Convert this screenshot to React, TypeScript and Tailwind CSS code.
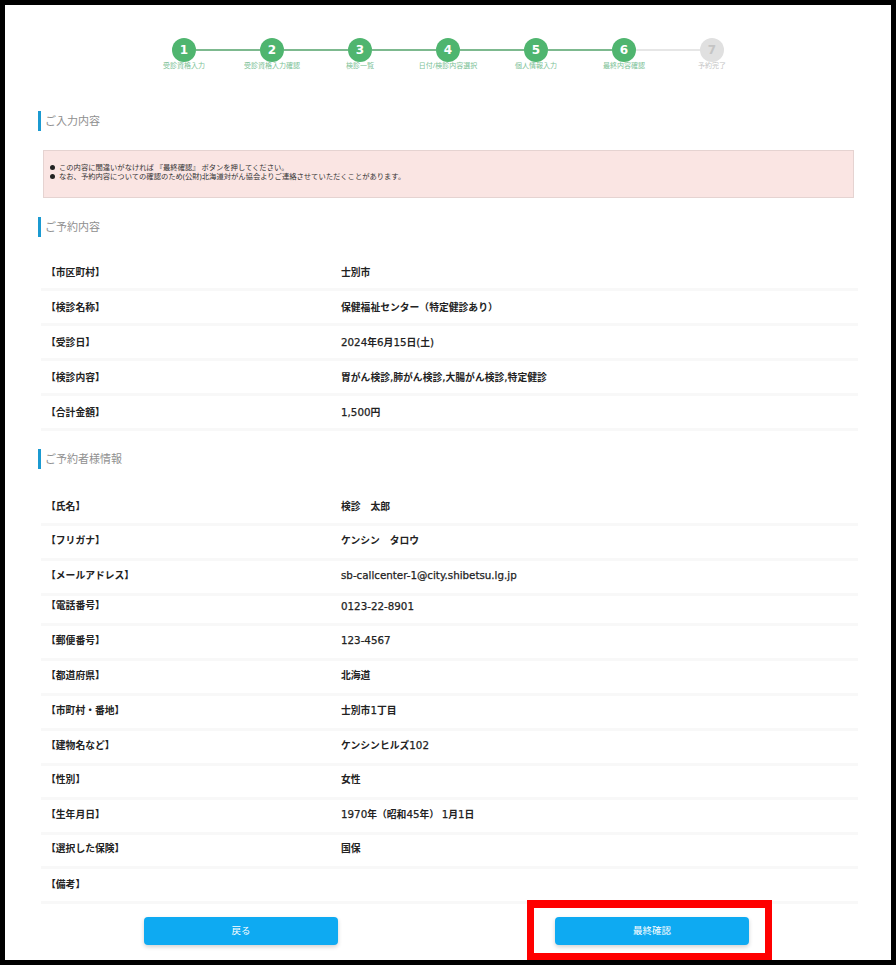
const font = { fontFamily: '"Noto Sans", "Noto Sans CJK JP", sans-serif' }

const steps = [
  { no: 1, label: '受診資格入力' },
  { no: 2, label: '受診資格入力確認' },
  { no: 3, label: '検診一覧' },
  { no: 4, label: '日付/検診内容選択' },
  { no: 5, label: '個人情報入力' },
  { no: 6, label: '最終内容確認' },
  { no: 7, label: '予約完了' },
]

const reserve = [
  ['【市区町村】', '士別市', 35, 'pt-[2px]'],
  ['【検診名称】', '保健福祉センター（特定健診あり）', 35, 'pt-[2px]'],
  ['【受診日】', '2024年6月15日(土)', 35, 'pt-[2px]'],
  ['【検診内容】', '胃がん検診,肺がん検診,大腸がん検診,特定健診', 35, 'pt-[2px]'],
  ['【合計金額】', '1,500円', 35, 'pt-[2px]'],
] as const

const person = [
  ['【氏名】', '検診　太郎', 35, ''],
  ['【フリガナ】', 'ケンシン　タロウ', 35, 'pb-[2px]'],
  ['【メールアドレス】', 'sb-callcenter-1@city.shibetsu.lg.jp', 35, 'pb-[2px]'],
  ['【電話番号】', '0123-22-8901', 30, 'pb-[6px]'],
  ['【郵便番号】', '123-4567', 35, 'pb-[2px]'],
  ['【都道府県】', '北海道', 35, 'pb-[2px]'],
  ['【市町村・番地】', '士別市1丁目', 35, 'pb-[2px]'],
  ['【建物名など】', 'ケンシンヒルズ102', 35, 'pb-[2px]'],
  ['【性別】', '女性', 34, 'pb-[2px]'],
  ['【生年月日】', '1970年（昭和45年） 1月1日', 35, 'pb-[2px]'],
  ['【選択した保険】', '国保', 34, 'pb-[2px]'],
  ['【備考】', '', 35, ''],
] as const

function Stepper() {
  return (
    <div className="flex justify-center">
      {steps.map((s, i) => {
        const done = s.no < 7
        return (
          <div key={s.no} className="flex w-[88px] flex-col items-center">
            <div className="flex w-full items-center">
              <div className={`h-[2px] flex-1 ${i === 0 ? '' : done ? 'bg-[#7db98f]' : 'bg-[#e6e6e6]'}`} />
              <div
                className={`flex size-[24px] items-center justify-center rounded-full font-['DejaVu_Sans'] text-[12px] font-bold ${
                  done ? 'bg-[#4fb56f] text-white' : 'bg-[#e0e0e0] text-[#c4c4c4]'
                }`}
              >
                {s.no}
              </div>
              <div className={`h-[2px] flex-1 ${i === 6 ? '' : s.no < 6 ? 'bg-[#7db98f]' : 'bg-[#e6e6e6]'}`} />
            </div>
            <div className={`-mt-[1px] whitespace-nowrap text-[7px] leading-[10px] ${done ? 'text-[#7cc196]' : 'text-[#c4c4c4]'}`}>
              {s.label}
            </div>
          </div>
        )
      })}
    </div>
  )
}

function Heading({ children }: { children: string }) {
  return (
    <div className="ml-[33px] flex h-[20px] items-center border-l-[3px] border-[#1b9ad1] pl-[4px] text-[11px] text-[#8f8f8f]">
      {children}
    </div>
  )
}

// latin runs in the reference are a wider face than the japanese
function Value({ text }: { text: string }) {
  return (
    <div>
      {text.split(/([\x21-\x7e]+)/).map((part, i) =>
        i % 2 ? (
          <span key={i} className="font-['DejaVu_Sans'] text-[10.3px] font-medium [-webkit-text-stroke:0.25px]">
            {part}
          </span>
        ) : (
          part
        ),
      )}
    </div>
  )
}

function Row({ label, value, h, pad }: { label: string; value: string; h: number; pad: string }) {
  return (
    <div
      className={`ml-[36px] mr-[33px] flex items-center border-b-[3px] border-[#f8f8f8] text-[9.8px] font-semibold text-[#222] ${pad}`}
      style={{ height: h }}
    >
      <div className="w-[300px] pl-[5px]">{label}</div>
      <Value text={value} />
    </div>
  )
}

function Btn({ children }: { children: string }) {
  return (
    <button className="flex h-[28px] w-[194px] items-center justify-center rounded-[4px] bg-[#0eaaf2] text-[9.5px] text-white shadow-[0_2px_4px_rgba(0,0,0,0.18)]">
      {children}
    </button>
  )
}

function Note({ children }: { children: string }) {
  return (
    <div className="flex items-center">
      <span className="mr-[4px] size-[5px] rounded-full bg-[#222]" />
      <span>{children}</span>
    </div>
  )
}

export default function App() {
  return (
    <div className="relative h-[965px] w-[896px] overflow-hidden bg-black p-[5px]" style={font}>
      <div className="h-[955px] bg-white pt-[33px]">
        <Stepper />
        <div className="mt-[40px]">
          <Heading>ご入力内容</Heading>
        </div>
        <div className="ml-[38px] mr-[37px] mt-[19px] flex h-[48px] flex-col justify-center border border-[#e5d3d1] bg-[#fae5e3] pb-[4px] pl-[6px] text-[7.3px] leading-[9.5px] text-[#333]">
          <Note>この内容に間違いがなければ 『最終確認』 ボタンを押してください。</Note>
          <Note>なお、予約内容についての確認のため(公財)北海道対がん協会よりご連絡させていただくことがあります。</Note>
        </div>
        <div className="mt-[19px]">
          <Heading>ご予約内容</Heading>
        </div>
        <div className="mt-[19px]">
          {reserve.map(([l, v, h, p]) => (
            <Row key={l} label={l} value={v} h={h} pad={p} />
          ))}
        </div>
        <div className="mt-[18px]">
          <Heading>ご予約者様情報</Heading>
        </div>
        <div className="mt-[22px]">
          {person.map(([l, v, h, p]) => (
            <Row key={l} label={l} value={v} h={h} pad={p} />
          ))}
        </div>
        <div className="mt-[13px] flex">
          <div className="ml-[139px]">
            <Btn>戻る</Btn>
          </div>
          <div className="ml-[217px]">
            <Btn>最終確認</Btn>
          </div>
        </div>
      </div>
      <div className="absolute left-[527px] top-[900px] h-[60px] w-[245px] border-x-[7px] border-b-[7px] border-t-[8px] border-[#ff0000]" />
    </div>
  )
}
